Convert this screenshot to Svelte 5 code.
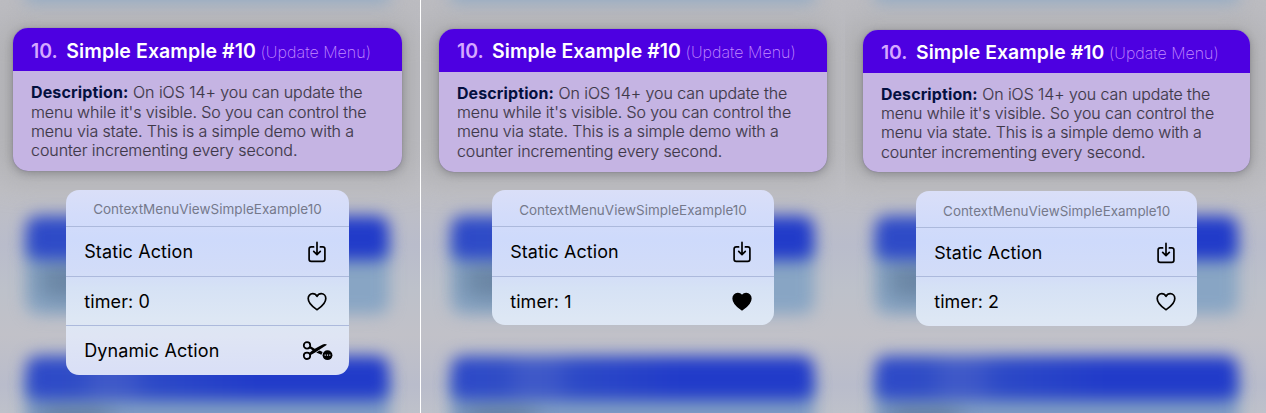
<script>
  const lines = [
    { text: "menu while it's visible. So you can control the", ls: -0.09 },
    { text: 'menu via state. This is a simple demo with a', ls: -0.1 },
    { text: 'counter incrementing every second.', ls: -0.07 }
  ];
  const panels = [
    { cls: 'first', rows: [['Static Action', 'download'], ['timer: 0', 'heart'], ['Dynamic Action', 'scissors']] },
    { cls: 'second', rows: [['Static Action', 'download'], ['timer: 1', 'heart-fill']] },
    { cls: 'third', rows: [['Static Action', 'download'], ['timer: 2', 'heart']] }
  ];
  const heart = 'M10 17.7C8.6 16.7 1.2 12.3 1.2 6.5C1.2 3.7 3.2 1.7 5.7 1.7C7.6 1.7 9.1 2.7 10 4.4C10.9 2.7 12.4 1.7 14.3 1.7C16.8 1.7 18.8 3.7 18.8 6.5C18.8 12.3 11.4 16.7 10 17.7Z';
</script>

<div class="page">
  {#each panels as panel}
    <section class="panel {panel.cls}">
      <div class="backdrop">
        <i class="halo"></i>
        <i class="teal top"></i>
        <i class="teal mid"></i>
        <i class="shade mid-shade"></i>
        <i class="teal low"></i>
        <i class="shade low-shade"></i>
        <i class="bar one"></i>
        <i class="bar two"></i>
      </div>
      <article class="card">
        <header>
          <span class="num">10.</span>
          <strong>Simple Example #10</strong>
          <span class="sub">(Update Menu)</span>
        </header>
        <div class="body">
          <div class="line"><b>Description:</b> <span class="lead">On iOS 14+ you can update the</span></div>
          {#each lines as line}
            <div class="line" style="letter-spacing: {line.ls}px">{line.text}</div>
          {/each}
        </div>
      </article>
      <div class="menu">
        <div class="menu-title">ContextMenuViewSimpleExample10</div>
        {#each panel.rows as [label, icon]}
          <div class="row">
            <span>{label}</span>
            <span class="icon">
              {#if icon === 'download'}
                <svg width="20" height="22" viewBox="0 0 20 22" fill="none" stroke="#000" stroke-width="1.7" stroke-linecap="round" stroke-linejoin="round">
                  <path d="M6.6 5.9H4.3Q2.1 5.9 2.1 8.1V18.2Q2.1 20.4 4.3 20.4H15.7Q17.9 20.4 17.9 18.2V8.1Q17.9 5.9 15.7 5.9H13.4" />
                  <path d="M10 1.4V13.4M6.7 10.4L10 13.6L13.3 10.4" />
                </svg>
              {:else if icon === 'scissors'}
                <svg class="wide" width="32" height="22" viewBox="0 0 32 22" fill="none" stroke="#000" stroke-width="1.8">
                  <circle cx="5" cy="5.4" r="3.2" />
                  <circle cx="5" cy="15.8" r="3.2" />
                  <path d="M7.7 7L12.8 10.2" stroke-width="2.2" />
                  <path d="M7 13.2L11.4 9.4L20.2 4.7Q23 3.5 25 4.7L13.2 12.4L8.4 15.2Z" fill="#000" stroke="none" />
                  <path d="M14.2 12.4L17.6 10.5L20.6 12L19.4 14.7Z" fill="#000" stroke="none" />
                  <circle cx="25.5" cy="15.2" r="4.9" fill="#000" stroke="none" />
                  <path d="M22.6 15.2h1.2M24.9 15.2h1.2M27.2 15.2h1.2" stroke="#dbe2f5" stroke-width="1.2" />
                </svg>
              {:else}
                <svg width="20" height="20" viewBox="0 0 20 20" fill={icon === 'heart-fill' ? '#000' : 'none'} stroke="#000" stroke-width="1.7" stroke-linejoin="round">
                  <path d={heart} />
                </svg>
              {/if}
            </span>
          </div>
        {/each}
      </div>
    </section>
  {/each}
</div>

<style>
  .page {
    display: grid;
    grid-template-columns: 421px 424px 421px;
    width: 1266px;
    height: 413px;
    overflow: hidden;
    font-family: Inter, 'Liberation Sans', sans-serif;
    background: #bfbfc5;
  }
  .panel {
    position: relative;
    display: flex;
    flex-direction: column;
    overflow: hidden;
    box-sizing: border-box;
    height: 413px;
    background: linear-gradient(#bcbcc1 0, #bfbfc4 190px, #b9bccb 245px, #bdc1ca 290px, #c1c1c8 335px, #b9bccb 385px, #bec1ca 413px);
  }
  .first { --s: 1; padding: 28.3px 0 0 13px; border-right: 1px solid #fff; --x: 26px; }
  .second { --s: 0.9965; padding: 29px 0 0 18px; --x: 30px; }
  .third { --s: 0.994; padding: 30.2px 0 0 18px; --x: 30px; }

  .backdrop { position: absolute; inset: 0; }
  .backdrop i { position: absolute; left: var(--x); width: 363px; filter: blur(8px); }
  .backdrop .halo { left: 3px; width: 408px; top: 26px; height: 150px; background: #a9a9ab; filter: blur(16px); }
  .top { top: -40px; height: 43px; background: #92aac4; }
  .mid { top: 240px; height: 74px; background: #88a5c4; border-radius: 12px; }
  .low { top: 380px; height: 60px; background: #7f9dc4; }
  .backdrop .shade { width: 70px; margin-left: 14px; background: #5f7a98; filter: blur(12px); opacity: .8; }
  .mid-shade { top: 264px; height: 34px; }
  .low-shade { top: 404px; height: 30px; }
  .backdrop .bar { height: 44px; border-radius: 12px; background: linear-gradient(90deg, #2d49c8 0, #2f4cc6 50px, #3f59c8 75px, #3d57c8 100px, #2c49c7 125px, #213bc9 230px); }
  .one { top: 216px; }
  .two { top: 356px; }

  .card {
    position: relative;
    width: calc(389px * var(--s));
    border-radius: 15px;
    overflow: hidden;
    background: #c5b4e3;
    flex: none;
    box-shadow: 0 2px 8px rgba(50, 50, 60, .32), 0 0 1px rgba(60, 40, 110, .5);
  }
  header {
    display: flex;
    align-items: baseline;
    box-sizing: border-box;
    height: calc(42.7px * var(--s));
    padding: calc(10.8px * var(--s)) 0 0 calc(18px * var(--s));
    background: #4d00e1;
    font-size: calc(19.5px * var(--s));
    line-height: calc(24px * var(--s));
    white-space: nowrap;
  }
  .num { width: calc(35.3px * var(--s)); color: #d5a8ff; font-weight: 600; }
  strong { width: calc(194.2px * var(--s)); color: #fff; font-weight: 600; letter-spacing: .09px; }
  .sub { color: #c48dff; font-size: calc(16px * var(--s)); font-weight: 200; letter-spacing: .04px; }
  .body {
    height: calc(100.4px * var(--s));
    box-sizing: border-box;
    padding: calc(12.3px * var(--s)) 0 0 calc(18px * var(--s));
    font-size: calc(16px * var(--s));
    line-height: calc(19.33px * var(--s));
    font-weight: 300;
    color: #3e3849;
    -webkit-text-stroke: .15px #3e3849;
    white-space: nowrap;
  }
  b { color: #04103f; font-weight: 700; letter-spacing: .14px; -webkit-text-stroke: 0; }
  .lead { letter-spacing: -.05px; }

  .menu {
    position: relative;
    margin: 18.6px 0 0 53px;
    width: calc(283px * var(--s));
    border-radius: 13px;
    overflow: hidden;
    background: linear-gradient(#dadff8 0, #d3dcfa 25px, #cedafb 50px, #d2dcf8 82px, #d6e2f5 98px, #dde7f4 128px, #dfe5f4 146px, #d9dff7 185px);
    color: #000;
  }
  .menu-title {
    box-sizing: border-box;
    height: calc(36.3px * var(--s));
    padding-top: 2.5px;
    text-align: center;
    line-height: 35px;
    font-size: calc(13.5px * var(--s));
    letter-spacing: .02px;
    color: #75798b;
  }
  .row {
    display: flex;
    align-items: center;
    justify-content: space-between;
    box-sizing: border-box;
    height: calc(49.6px * var(--s));
    padding: .4px calc(21.6px * var(--s)) 0 18.2px;
    border-top: 1px solid #acb9dc;
    font-size: calc(18px * var(--s));
    letter-spacing: .11px;
  }
  .icon { display: flex; padding-top: 1px; }
  .wide { margin-right: -7px; }
</style>
